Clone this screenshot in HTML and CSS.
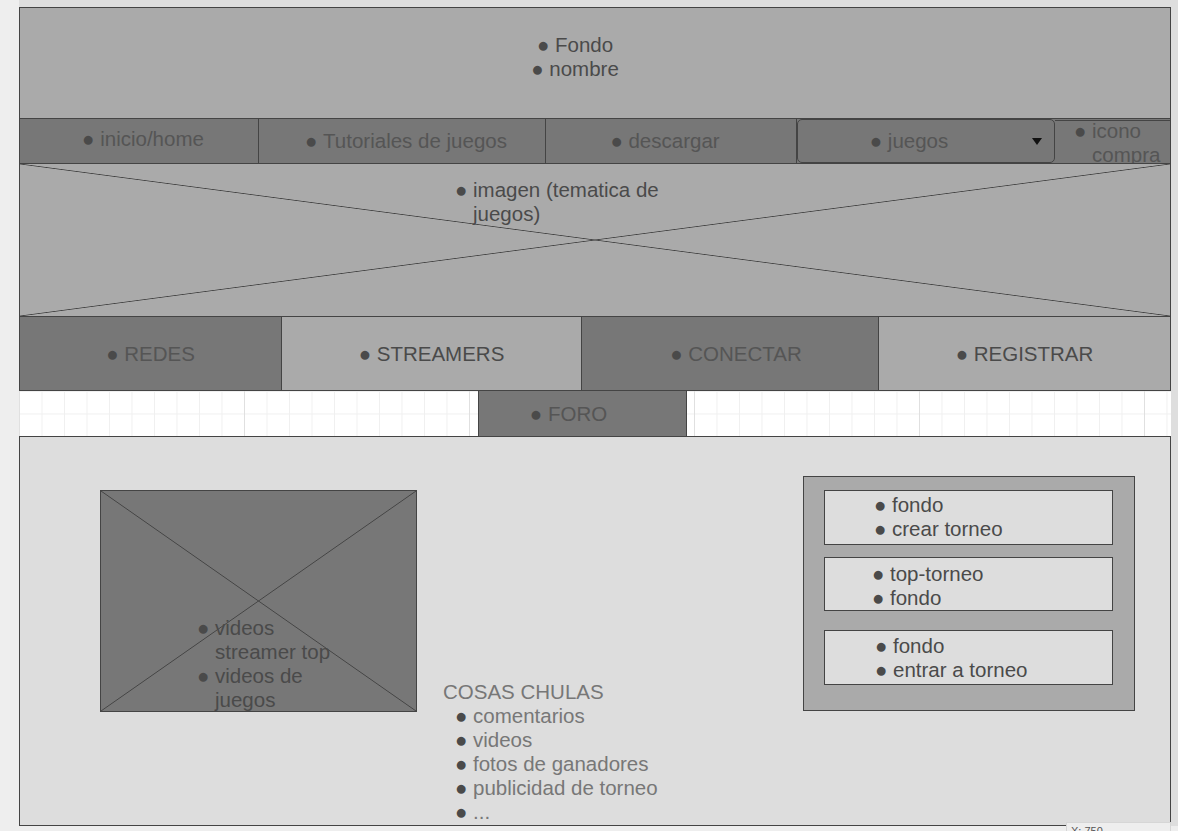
FILE: index.html
```html
<!DOCTYPE html>
<html lang="es">
<head>
    <meta http-equiv="Content-Type" content="text/html; charset=utf-8"/>
    <link rel="stylesheet" href="styles.css">
</head>
<body>
<div class="canvas">
    <div class="frame">
        <header class="head">
            <ul class="dots-center head-list">
                <li>Fondo</li>
                <li>nombre</li>
            </ul>
        </header>

        <nav class="nav">
            <div class="nav-item nav-home"><ul class="dots-center"><li>inicio/home</li></ul></div>
            <div class="nav-item nav-tuto"><ul class="dots-center"><li>Tutoriales de juegos</li></ul></div>
            <div class="nav-item nav-down"><ul class="dots-center"><li>descargar</li></ul></div>
            <div class="nav-item nav-games">
                <ul class="dots-center"><li>juegos</li></ul>
                <span class="caret"></span>
            </div>
            <div class="nav-item nav-cart"><ul class="cart-list"><li>icono compra</li></ul></div>
        </nav>

        <section class="hero cross">
            <ul class="hero-list"><li>imagen (tematica de juegos)</li></ul>
        </section>

        <div class="buttons">
            <div class="btn btn-dark btn-redes"><ul class="dots-center"><li>REDES</li></ul></div>
            <div class="btn btn-light btn-streamers"><ul class="dots-center"><li>STREAMERS</li></ul></div>
            <div class="btn btn-dark btn-conectar"><ul class="dots-center"><li>CONECTAR</li></ul></div>
            <div class="btn btn-light btn-registrar"><ul class="dots-center"><li>REGISTRAR</li></ul></div>
        </div>

        <div class="foro-row">
            <div class="foro"><ul class="dots-center"><li>FORO</li></ul></div>
        </div>

        <main class="main">
            <div class="video cross">
                <ul class="video-list">
                    <li>videos streamer top</li>
                    <li>videos de juegos</li>
                </ul>
            </div>

            <div class="cosas">
                <p class="cosas-title">COSAS CHULAS</p>
                <ul class="cosas-list">
                    <li>comentarios</li>
                    <li>videos</li>
                    <li>fotos de ganadores</li>
                    <li>publicidad de torneo</li>
                    <li>...</li>
                </ul>
            </div>

            <div class="torneos">
                <div class="torneo torneo-crear">
                    <ul><li>fondo</li><li>crear torneo</li></ul>
                </div>
                <div class="torneo torneo-top">
                    <ul><li>top-torneo</li><li>fondo</li></ul>
                </div>
                <div class="torneo torneo-entrar">
                    <ul><li>fondo</li><li>entrar a torneo</li></ul>
                </div>
            </div>
        </main>
    </div>
</div>
<div class="coords">X: 750</div>
</body>
</html>
```

FILE: styles.css
```css
* {
    box-sizing: border-box;
}

body {
    margin: 0;
    background: #eeeeee;
    font-family: "Liberation Sans", Arial, sans-serif;
    font-size: 20.5px;
    line-height: 24px;
    color: #4a4a4a;
}

ul {
    margin: 0;
    padding: 0;
}

li::marker {
    content: "\25CF  ";
    color: #4a4a4a;
}

.dots-center {
    list-style-position: inside;
    text-align: center;
}

.canvas {
    width: 1159px;
    margin-left: 19px;
    padding-top: 7px;
    background: #dedede;
}

.frame {
    width: 1152px;
}

/* placeholder cross (image boxes) */
.cross {
    background:
        linear-gradient(to top right, transparent calc(50% - 0.8px), #444 50%, transparent calc(50% + 0.8px)),
        linear-gradient(to bottom right, transparent calc(50% - 0.8px), #444 50%, transparent calc(50% + 0.8px));
}

/* header */
.head {
    height: 112px;
    border: 1px solid #444;
    background: #aaaaaa;
    padding-top: 25px;
}

.head-list {
    padding-right: 40px;
}

/* nav */
.nav {
    display: flex;
    height: 45px;
    border: 1px solid #444;
    border-top: none;
    background: #777777;
    color: #555555;
}

.nav-item {
    display: flex;
    align-items: center;
    justify-content: center;
    border-right: 1px solid #444;
}

.nav-home {
    width: 239px;
    padding-bottom: 4px;
    padding-left: 8px;
}

.nav-tuto {
    width: 287px;
    padding-left: 8px;
}

.nav-down {
    width: 251px;
    padding-right: 12px;
}

.nav-games {
    width: 258px;
    border: 1px solid #444;
    border-radius: 5px;
    padding: 0 12px 0 0;
}

.nav-games ul {
    flex: 1;
    padding-right: 12px;
}

.caret {
    width: 0;
    height: 0;
    border-left: 5px solid transparent;
    border-right: 5px solid transparent;
    border-top: 7px solid #111;
}

.nav-cart {
    flex: 1;
    display: block;
    border-right: none;
    overflow: hidden;
    margin-top: 1px;
    border-top: 1px solid #444;
}

.cart-list {
    padding-left: 37px;
    margin-top: -2px;
}

/* hero image */
.hero {
    height: 153px;
    border: 1px solid #444;
    border-top: none;
    background-color: #aaaaaa;
    padding-top: 14px;
}

.hero-list {
    width: 200px;
    margin-left: 453px;
}

/* big buttons */
.buttons {
    display: flex;
    height: 74px;
    border: 1px solid #444;
    border-top: none;
}

.btn {
    display: flex;
    align-items: center;
    justify-content: center;
    border-right: 1px solid #444;
}

.btn-dark {
    background: #777777;
    color: #555555;
}

.btn-light {
    background: #aaaaaa;
}

.btn-redes {
    width: 262px;
}

.btn-streamers {
    width: 300px;
}

.btn-conectar {
    width: 297px;
    padding-left: 12px;
}

.btn-registrar {
    flex: 1;
    border-right: none;
}

/* foro */
.foro-row {
    height: 45px;
    background-color: #ffffff;
    background-image:
        linear-gradient(90deg, #e0e0e0 1px, transparent 1px),
        linear-gradient(90deg, #f0f0f0 1px, transparent 1px),
        linear-gradient(#f0f0f0 1px, transparent 1px);
    background-size: 225px 100%, 22.5px 22.5px, 22.5px 22.5px;
}

.foro {
    width: 209px;
    height: 45px;
    margin-left: 459px;
    border-left: 1px solid #444;
    border-right: 1px solid #444;
    background: #777777;
    color: #555555;
    display: flex;
    align-items: center;
    justify-content: center;
    padding-right: 28px;
}

/* main area */
.main {
    display: flex;
    align-items: flex-start;
    height: 390px;
    border: 1px solid #444;
    background: #dddddd;
}

.video {
    width: 317px;
    height: 222px;
    margin: 53px 0 0 80px;
    border: 1px solid #444;
    background-color: #777777;
    padding-top: 125px;
    overflow: hidden;
}

.video-list {
    width: 120px;
    margin-left: 114px;
}

.cosas {
    margin: 243px 0 0 26px;
    color: #777777;
}

.cosas-title {
    margin: 0;
}

.cosas-list {
    padding-left: 30px;
}

.torneos {
    width: 332px;
    height: 235px;
    margin: 39px 35px 0 auto;
    border: 1px solid #444;
    background: #aaaaaa;
    padding: 13px 21px 0 20px;
}

.torneo {
    border: 1px solid #444;
    background: #dddddd;
}

.torneo-crear {
    height: 55px;
    margin-bottom: 12px;
    padding: 2px 0 0 67px;
}

.torneo-top {
    height: 54px;
    margin-bottom: 19px;
    padding: 4px 0 0 65px;
}

.torneo-entrar {
    height: 55px;
    padding: 3px 0 0 68px;
}

/* editor coordinate tooltip */
.coords {
    position: absolute;
    left: 1066px;
    top: 822px;
    width: 105px;
    height: 16px;
    padding: 2px 0 0 4px;
    background: #eeeeee;
    border: 1px solid #d6d6d6;
    font-size: 11px;
    line-height: 12px;
    color: #555;
}
```
